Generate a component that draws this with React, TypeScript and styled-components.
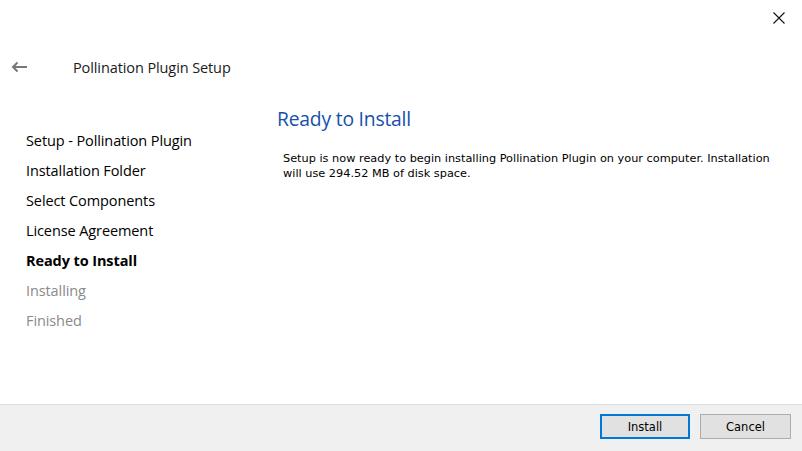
import React from "react";
import styled, { createGlobalStyle } from "styled-components";

const Global = createGlobalStyle`
  html, body { margin: 0; padding: 0; background: #fff; }
  body { width: 802px; height: 451px; overflow: hidden; }
`;

const Window = styled.div`
  width: 802px;
  height: 451px;
  display: flex;
  flex-direction: column;
  background: #fff;
  font-family: "Open Sans", "Noto Sans", sans-serif;
  color: #000;
`;

const TopBar = styled.div`
  height: 40px;
  display: flex;
  justify-content: flex-end;
  align-items: flex-start;
`;

const CloseButton = styled.div`
  width: 46px;
  height: 36px;
  display: flex;
  align-items: center;
  justify-content: center;
`;

const Header = styled.div`
  height: 56px;
  display: flex;
  align-items: center;
  padding-left: 11px;
  margin-top: -1px;
`;

const BackArrow = styled.div`
  width: 17px;
  display: flex;
  align-items: center;
`;

const HeaderTitle = styled.div`
  margin-left: 45px;
  font-size: 14.5px;
  color: #1a1a1a;
  letter-spacing: -0.1px;
`;

const Body = styled.div`
  flex: 1;
  display: flex;
`;

const Steps = styled.ul`
  list-style: none;
  margin: 0;
  padding: 31px 0 0 26px;
  width: 252px;
  display: flex;
  flex-direction: column;
`;

const Step = styled.li<{ $state: "done" | "current" | "todo" }>`
  height: 30px;
  font-size: 14.5px;
  line-height: 30px;
  letter-spacing: -0.1px;
  font-weight: ${(p) => (p.$state === "current" ? 700 : 400)};
  color: ${(p) => (p.$state === "todo" ? "#8a8a8a" : "#000")};
`;

const Content = styled.div`
  flex: 1;
  padding-top: 9px;
`;

const Heading = styled.h1`
  margin: 0 0 0 -1px;
  font-size: 19.3px;
  font-weight: 400;
  color: #1650ab;
  line-height: 30px;
  letter-spacing: -0.2px;
`;

const Para = styled.p`
  margin: 17px 0 0 5px;
  width: 500px;
  font-family: "DejaVu Sans", sans-serif;
  font-size: 11.3px;
  line-height: 15px;
  letter-spacing: 0px;
  color: #000;
`;

const Footer = styled.div`
  border-top: 1px solid #dfdfdf;
  background: #f0f0f0;
  display: flex;
  justify-content: flex-end;
  align-items: flex-start;
  padding: 9px 11px 0 0;
  gap: 10px;
  box-sizing: border-box;
  height: 47px;
`;

const Button = styled.button<{ $default?: boolean }>`
  width: ${(p) => (p.$default ? "90px" : "91px")};
  height: 25px;
  box-sizing: border-box;
  background: #e1e1e1;
  border: ${(p) => (p.$default ? "2px solid #0078d7" : "1px solid #adadad")};
  font-family: "DejaVu Sans", sans-serif;
  font-size: 11.5px;
  color: #000;
  padding: 1px 0 0;
`;

export default function App() {
  return (
    <>
      <Global />
      <Window>
        <TopBar>
          <CloseButton>
            <svg width="12" height="12" viewBox="0 0 12 12">
              <path d="M0.5 0.5 L11.5 11.5 M11.5 0.5 L0.5 11.5" stroke="#111" strokeWidth="1.1" />
            </svg>
          </CloseButton>
        </TopBar>
        <Header>
          <BackArrow>
            <svg width="17" height="12" viewBox="0 0 17 12">
              <path d="M16 6 H2 M6.5 1.5 L2 6 L6.5 10.5" stroke="#777" strokeWidth="2" fill="none" />
            </svg>
          </BackArrow>
          <HeaderTitle>Pollination Plugin Setup</HeaderTitle>
        </Header>
        <Body>
          <Steps>
            <Step $state="done">Setup - Pollination Plugin</Step>
            <Step $state="done">Installation Folder</Step>
            <Step $state="done">Select Components</Step>
            <Step $state="done">License Agreement</Step>
            <Step $state="current">Ready to Install</Step>
            <Step $state="todo">Installing</Step>
            <Step $state="todo">Finished</Step>
          </Steps>
          <Content>
            <Heading>Ready to Install</Heading>
            <Para>
              Setup is now ready to begin installing Pollination Plugin on your computer. Installation will
              use 294.52 MB of disk space.
            </Para>
          </Content>
        </Body>
        <Footer>
          <Button $default>Install</Button>
          <Button>Cancel</Button>
        </Footer>
      </Window>
    </>
  );
}
